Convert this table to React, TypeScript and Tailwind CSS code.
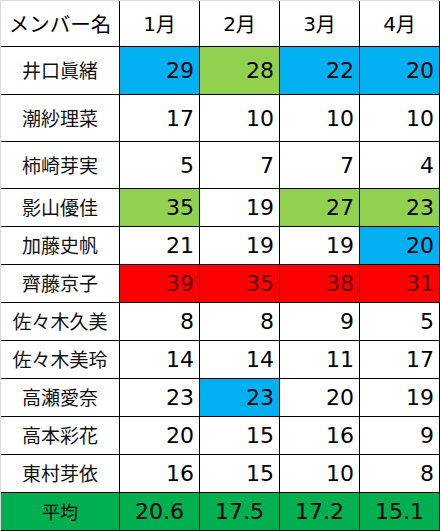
import React from "react";

type Cell = { v: string; c?: "blue" | "green" | "red" };
type Row = { name: string; cells: Cell[]; h: string };

const rows: Row[] = [
  { name: "井口眞緒", h: "h-[48px]", cells: [{ v: "29", c: "blue" }, { v: "28", c: "green" }, { v: "22", c: "blue" }, { v: "20", c: "blue" }] },
  { name: "潮紗理菜", h: "h-[47px]", cells: [{ v: "17" }, { v: "10" }, { v: "10" }, { v: "10" }] },
  { name: "柿崎芽実", h: "h-[47px]", cells: [{ v: "5" }, { v: "7" }, { v: "7" }, { v: "4" }] },
  { name: "影山優佳", h: "h-[38px]", cells: [{ v: "35", c: "green" }, { v: "19" }, { v: "27", c: "green" }, { v: "23", c: "green" }] },
  { name: "加藤史帆", h: "h-[38px]", cells: [{ v: "21" }, { v: "19" }, { v: "19" }, { v: "20", c: "blue" }] },
  { name: "齊藤京子", h: "h-[38px]", cells: [{ v: "39", c: "red" }, { v: "35", c: "red" }, { v: "38", c: "red" }, { v: "31", c: "red" }] },
  { name: "佐々木久美", h: "h-[38px]", cells: [{ v: "8" }, { v: "8" }, { v: "9" }, { v: "5" }] },
  { name: "佐々木美玲", h: "h-[38px]", cells: [{ v: "14" }, { v: "14" }, { v: "11" }, { v: "17" }] },
  { name: "高瀬愛奈", h: "h-[38px]", cells: [{ v: "23" }, { v: "23", c: "blue" }, { v: "20" }, { v: "19" }] },
  { name: "高本彩花", h: "h-[38px]", cells: [{ v: "20" }, { v: "15" }, { v: "16" }, { v: "9" }] },
  { name: "東村芽依", h: "h-[38px]", cells: [{ v: "16" }, { v: "15" }, { v: "10" }, { v: "8" }] },
];

const bg = (c?: string) =>
  c === "blue" ? "bg-[#00b0f0] text-black" : c === "green" ? "bg-[#92d050] text-black" : c === "red" ? "bg-[#ff0000] text-[#5a0000]" : "bg-white text-black";

const jp = "font-['Noto_Sans_CJK_JP','Noto_Sans',sans-serif]";
const num = "font-['DejaVu_Sans','Noto_Sans_CJK_JP',sans-serif]";

export default function App() {
  return (
    <div className="w-[440px] h-[531px] bg-white border-t border-l border-[#dadada] overflow-hidden">
      <div className="grid grid-cols-[119px_80px_80px_80px_80px]">
        <div className={`h-[46px] border-r border-b border-black flex items-center justify-center text-[20.5px] text-black ${jp}`}>メンバー名</div>
        {["1月", "2月", "3月", "4月"].map((m) => (
          <div key={m} className={`h-[46px] border-r border-b border-black flex items-center justify-center text-[20px] text-black ${jp}`}>
            <span className={num}>{m.slice(0, 1)}</span>
            <span>{m.slice(1)}</span>
          </div>
        ))}
        {rows.map((r) => (
          <React.Fragment key={r.name}>
            <div className={`${r.h} border-r border-b border-black flex items-center justify-center text-[19px] text-[#111] bg-white ${jp}`}>{r.name}</div>
            {r.cells.map((c, i) => (
              <div key={i} className={`${r.h} border-r border-b border-black flex items-center justify-end pr-[5px] text-[22px] ${num} ${bg(c.c)}`}>
                {c.v}
              </div>
            ))}
          </React.Fragment>
        ))}
        <div className={`h-[38px] border-r border-b border-black flex items-center justify-center text-[18px] text-black bg-[#00b050] ${jp}`}>平均</div>
        {["20.6", "17.5", "17.2", "15.1"].map((v) => (
          <div key={v} className={`h-[38px] border-r border-b border-black flex items-center justify-center text-[22px] text-black bg-[#00b050] ${num}`}>{v}</div>
        ))}
      </div>
    </div>
  );
}
